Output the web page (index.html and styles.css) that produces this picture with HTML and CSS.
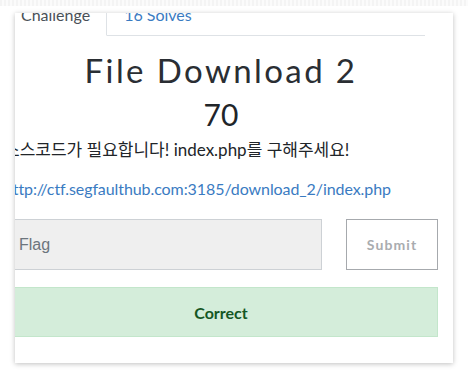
FILE: index.html
```html
<!DOCTYPE html>
<html lang="ko">
<head>
<meta charset="utf-8">
<link rel="stylesheet" href="styles.css">
</head>
<body>
<div class="backdrop"></div>
<div class="modal">
  <div class="modal-inner">
    <nav class="tabs">
      <span class="tab active">Challenge</span>
      <a class="tab link" href="#">16 Solves</a>
    </nav>
    <h2 class="name">File Download 2</h2>
    <h3 class="value">70</h3>
    <p class="desc">소스코드가 필요합니다! index.php를 구해주세요!</p>
    <p class="url"><a href="#">http://ctf.segfaulthub.com:3185/download_2/index.php</a></p>
    <div class="submit-row">
      <input class="flag" type="text" placeholder="Flag">
      <button class="submit" type="button">Submit</button>
    </div>
    <div class="result">Correct</div>
  </div>
</div>
</body>
</html>
```
FILE: styles.css
```css
html, body {
  margin: 0;
  padding: 0;
  background: #fff;
  width: 468px;
  height: 378px;
  overflow: hidden;
}
body {
  font-family: Lato, "Noto Sans CJK KR", sans-serif;
  color: #212529;
}
.backdrop {
  height: 6px;
  background: repeating-linear-gradient(90deg, #f4f4f4 0 2px, #fbfbfb 2px 4px);
}
.modal {
  margin: 7px 0 0 15px;
  width: 438px;
  height: 350px;
  background: #fff;
  overflow: hidden;
  box-shadow: 0 1px 5px rgba(0, 0, 0, 0.25);
}
.modal-inner {
  margin: -19px 15px 0 -11px;
}
.tabs {
  display: flex;
  border-bottom: 1px solid #dee2e6;
  margin-right: 13px;
}
.tab {
  display: block;
  padding: 8px 16px;
  border: 1px solid transparent;
  margin-bottom: -1px;
  font-size: 16px;
  line-height: 24px;
  text-decoration: none;
}
.tab.active {
  border-color: #dee2e6 #dee2e6 #fff;
  background: #fff;
  color: #495057;
}
.tab.link {
  color: #3a7bc2;
}
.name {
  margin: 14px 0 0;
  text-align: center;
  font-weight: 400;
  font-size: 33px;
  line-height: 40px;
  letter-spacing: 2.4px;
  color: #2a2e33;
}
.value {
  margin: 6px 0 0;
  text-align: center;
  font-weight: 400;
  font-size: 30px;
  line-height: 36px;
}
.desc {
  margin: 6px 0 0;
  font-size: 17px;
  line-height: 24px;
  white-space: nowrap;
}
.url {
  margin: 15px 0 0;
  font-size: 16px;
  line-height: 24px;
  letter-spacing: -0.08px;
  white-space: nowrap;
}
.url a {
  color: #3a7bc2;
  text-decoration: none;
}
.submit-row {
  display: flex;
  gap: 24px;
  margin-top: 18px;
}
.flag {
  flex: 0 0 318px;
  box-sizing: border-box;
  height: 51px;
  padding: 0 0 0 14px;
  border: 1px solid #cdd1d5;
  background: #efefef;
  font-family: "Liberation Sans", Arial, sans-serif;
  font-size: 16px;
  color: #495057;
  outline: none;
  border-radius: 0;
}
.flag::placeholder {
  color: #6c757d;
}
.submit {
  flex: 1;
  box-sizing: border-box;
  height: 51px;
  border: 1px solid #a6a9ad;
  background: #fff;
  color: #a9acaf;
  font-family: Lato, sans-serif;
  font-weight: 700;
  font-size: 14px;
  letter-spacing: 1.1px;
  border-radius: 0;
}
.result {
  margin-top: 17px;
  height: 50px;
  box-sizing: border-box;
  border: 1px solid #c3e6cb;
  background: #d4edda;
  color: #155724;
  font-weight: 700;
  font-size: 16px;
  display: flex;
  align-items: center;
  justify-content: center;
}
```
